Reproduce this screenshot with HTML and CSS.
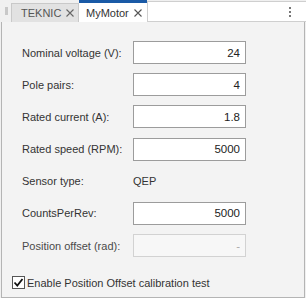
FILE: index.html
```html
<!DOCTYPE html>
<html lang="en">
<head>
  <meta charset="UTF-8">
  <title>MyMotor</title>
  <link rel="stylesheet" href="styles.css">
</head>
<body>
  <div class="tabbar">
    <div class="grip"></div>
    <div class="tab">TEKNIC
      <svg class="close" width="8" height="8" viewBox="0 0 8 8"><path d="M0.5 0.5 L7.5 7.5 M7.5 0.5 L0.5 7.5" stroke="#666" stroke-width="1.1"/></svg>
    </div>
    <div class="tab active">MyMotor
      <svg class="close" width="8" height="8" viewBox="0 0 8 8"><path d="M0.5 0.5 L7.5 7.5 M7.5 0.5 L0.5 7.5" stroke="#555" stroke-width="1.1"/></svg>
    </div>
    <div class="filler">
      <span class="dots"><i></i><i></i><i></i></span>
    </div>
  </div>

  <div class="panel">
    <div class="form">
      <label>Nominal voltage (V):</label>
      <input type="text" value="24">
      <label>Pole pairs:</label>
      <input type="text" value="4">
      <label>Rated current (A):</label>
      <input type="text" value="1.8">
      <label>Rated speed (RPM):</label>
      <input type="text" value="5000">
      <label>Sensor type:</label>
      <div class="value">QEP</div>
      <label>CountsPerRev:</label>
      <input type="text" value="5000">
      <label class="dim">Position offset (rad):</label>
      <input type="text" value="-" disabled>
    </div>
    <div class="check-row">
      <span class="box">
        <svg width="11" height="11" viewBox="0 0 11 11"><path d="M1.5 5.5 L4.3 8.5 L9.5 2" fill="none" stroke="#111" stroke-width="1.8"/></svg>
      </span>
      Enable Position Offset calibration test
    </div>
  </div>
</body>
</html>
```

FILE: styles.css
```css
body {
  margin: 0;
  font-family: 'Liberation Sans', Arial, sans-serif;
  font-size: 11px;
  color: #333;
  background: #f0f0f0;
}

.tabbar {
  display: flex;
  align-items: flex-end;
  height: 22px;
  background: #f0f0f0;
}

.grip {
  width: 3px;
  height: 8px;
  margin: 0 3px 7px 5px;
  background: #c8c8c8;
}

.tab {
  box-sizing: border-box;
  height: 19px;
  width: 68px;
  padding-left: 9px;
  display: flex;
  align-items: center;
  white-space: nowrap;
  font-size: 11px;
  color: #555;
  background: #e2e2e2;
  border: 1px solid #c9c9c9;
  border-bottom: none;
}

.tab.active {
  height: 22px;
  padding-left: 7px;
  color: #333;
  background: #fff;
  border: none;
  border-top: 3px solid #1a5aa6;
}

.close {
  margin-left: 5px;
  flex: none;
}

.filler {
  flex: 1;
  box-sizing: border-box;
  height: 21px;
  margin-top: 1px;
  align-self: flex-start;
  background: #fff;
  border: 1px solid #cfcfcf;
  border-right: none;
  position: relative;
}

.dots {
  position: absolute;
  left: 141px;
  top: 5px;
  display: flex;
  flex-direction: column;
  gap: 2px;
}

.dots i {
  width: 2px;
  height: 2px;
  background: #777;
}

.panel {
  box-sizing: border-box;
  margin-left: 1px;
  width: 304px;
  height: 276px;
  background: #f3f3f3;
  border: 1px solid #b4b4b4;
  border-top: none;
  padding: 19px 0 0 20px;
}

.form {
  display: grid;
  grid-template-columns: 111px 113px;
  grid-auto-rows: 23px;
  row-gap: 9.2px;
  align-items: center;
}

label {
  color: #333;
}

label.dim {
  color: #4a4a4a;
}

input {
  box-sizing: border-box;
  width: 113px;
  height: 23px;
  padding: 0 5px;
  border: 1px solid #9c9c9c;
  font-family: inherit;
  font-size: 11.5px;
  color: #222;
  text-align: right;
  background: #fff;
  outline: none;
}

input:disabled {
  border-color: #d2d2d2;
  background: #f7f7f7;
  color: #aaa;
}

.value {
  color: #333;
}

.check-row {
  display: flex;
  align-items: center;
  gap: 2px;
  margin: 19px 0 0 -10px;
  color: #333;
}

.box {
  box-sizing: border-box;
  width: 13px;
  height: 13px;
  border: 1px solid #555;
  background: #fff;
  display: flex;
  align-items: center;
  justify-content: center;
}
```
